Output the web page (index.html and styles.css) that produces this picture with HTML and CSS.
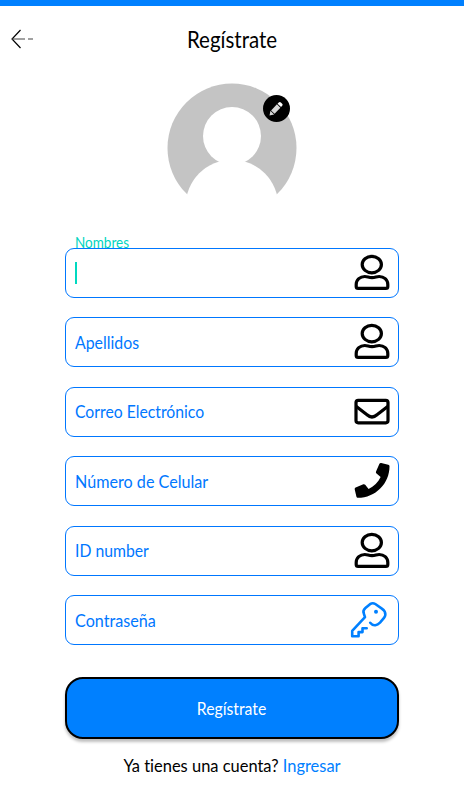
FILE: index.html
```html
<!DOCTYPE html>
<html lang="es">
<head>
  <meta charset="UTF-8" />
  <meta name="viewport" content="width=device-width, initial-scale=1.0" />
  <title>Regístrate</title>
  <link rel="stylesheet" href="styles.css">
</head>
<body>
  <svg width="0" height="0" class="sprite">
    <symbol id="user" viewBox="0 0 40 40">
      <ellipse cx="21.8" cy="11.6" rx="9.6" ry="8.2" />
      <path d="M6.2 33.5v-2c0-5 4-8 8.6-8 2.6 0 4 1.2 7.2 1.2s4.600-1.200 7.200-1.200c4.600 0 8.600 3 8.600 8v2q0 1.900-1.900 1.900H8.100q-1.900 0-1.900-1.900z" />
    </symbol>
  </svg>

  <header class="header">
    <a class="back" href="#" aria-label="Volver">
      <svg width="22" height="20" viewBox="0 0 22 20">
        <path d="M9.500 1L1 10l8.500 9" stroke="#000" stroke-width="1.200" fill="none" />
        <path d="M1 10h13M17 10h5" stroke="#444" stroke-width="1.200" />
      </svg>
    </a>
    <h1>Regístrate</h1>
  </header>

  <div class="avatar">
    <svg width="130" height="130" viewBox="0 0 130 130">
      <circle cx="65" cy="65" r="64.500" fill="#c4c4c4" />
      <circle cx="65" cy="53" r="29" fill="#fff" />
      <circle cx="65" cy="123" r="46.300" fill="#fff" />
    </svg>
    <button class="edit" type="button" aria-label="Editar">
      <svg width="27" height="27" viewBox="0 0 27 27">
        <g transform="translate(6.500 20.500) rotate(-46)" fill="#d6d6d6">
          <path d="M0 0l4-2.600v5.200z" />
          <path d="M4.800-2.400h8.400v4.800H4.800z" />
          <path d="M14.100-2.400h1.700q1.500 0 1.500 1.500v1.800q0 1.500-1.500 1.500h-1.700z" fill="#fff" />
        </g>
      </svg>
    </button>
  </div>

  <form class="form">
    <div class="field focused">
      <label class="name-label">Nombres</label>
      <span class="caret"></span>
      <svg class="icon"><use href="#user" /></svg>
    </div>
    <div class="field">
      <label>Apellidos</label>
      <svg class="icon"><use href="#user" /></svg>
    </div>
    <div class="field">
      <label class="narrow">Correo Electrónico</label>
      <svg class="icon mail" viewBox="0 0 40 40">
        <rect x="6" y="8.300" width="32" height="22.500" rx="2.200" />
        <path d="M6 14.200l11 8.600q5 4.400 10 0l11-8.600" />
      </svg>
    </div>
    <div class="field">
      <label class="wide">Número de Celular</label>
      <svg class="icon phone" viewBox="0 0 40 40">
        <path transform="translate(4.700 2) scale(.068)" d="M493.400 24.600l-104-24c-11.300-2.600-22.900 3.300-27.500 13.900l-48 112c-4.200 9.800-1.400 21.300 6.900 28l60.600 49.600c-36 76.700-98.900 140.500-177.200 177.200l-49.600-60.600c-6.800-8.300-18.200-11.100-28-6.900l-112 48C3.900 366.500-2 378.100.6 389.400l24 104C27.100 504.200 36.700 512 48 512c256.100 0 464-207.500 464-464 0-11.200-7.700-20.900-18.600-23.400z" />
      </svg>
    </div>
    <div class="field">
      <label class="narrow">ID number</label>
      <svg class="icon"><use href="#user" /></svg>
    </div>
    <div class="field">
      <label class="wide">Contraseña</label>
      <svg class="icon key" viewBox="0 0 40 40">
        <path d="M20.200 22.800q2.300 2.900 5.200 2.400 2.400-.4 4.600-2.600l3.800-4.400q2.600-3.300.9-6.700-.8-1.600-3.200-3.200l-6.200-4.300q-2.600-1.600-5.300.2l-4.600 3.900q-3 2.600-1.500 5.700l1.100 3.400L2.200 30.800v5.400h6.400v-4.100h3.900v-3.900h4.200" />
        <circle cx="26" cy="11.800" r="2" class="dot" />
      </svg>
    </div>

    <button class="submit" type="submit"><span>Regístrate</span></button>
  </form>

  <p class="login">Ya tienes una cuenta? <a href="#">Ingresar</a></p>
</body>
</html>
```
FILE: styles.css
```css
* { box-sizing: border-box; }
body {
  margin: 0;
  height: 800px;
  overflow: hidden;
  border-top: 6px solid #0080ff;
  background: #fff;
  color: #000;
  font-family: Lato, "Open Sans", sans-serif;
  font-variant-ligatures: none;
}
.sprite { position: absolute; }

.header { display: grid; grid-template-columns: 65px 1fr 65px; align-items: center; height: 66px; }
.back { display: flex; padding-left: 11px; }
h1 { margin: 0; font-size: 23px; line-height: 26px; font-weight: 400; text-align: center; transform: scaleX(0.89); }

.avatar { position: relative; width: 130px; height: 130px; margin: 11px auto 0; }
.edit {
  position: absolute; top: 12px; right: 7px;
  width: 27px; height: 27px; padding: 0;
  border: 0; border-radius: 50%; background: #000;
}
.edit svg { display: block; }

.form { width: 334px; margin: 34.500px auto 0; display: flex; flex-direction: column; gap: 19.600px; }
.field {
  position: relative;
  display: flex; align-items: center; justify-content: space-between;
  height: 50px; padding: 0 8px 0 9px;
  border: 1.300px solid #0077ff; border-radius: 9px;
}
.field label { color: #0077ff; font-size: 17.500px; white-space: nowrap; transform: scaleX(0.907); transform-origin: left; }
.field .narrow { transform: scaleX(0.9); }
.field .wide { transform: scaleX(0.923); }
.field .name-label { position: absolute; top: -15px; left: 9px; font-size: 14.500px; line-height: 18px; color: #00d5c0; transform: scaleX(0.93); }
.caret { width: 2px; height: 22px; background: #00d9c0; }

.icon { width: 40px; height: 40px; fill: none; stroke: #000; stroke-width: 3.200; stroke-linejoin: round; }
.phone { fill: #000; stroke: none; }
.key { stroke: #0080ff; stroke-width: 2.600; stroke-linecap: round; }
.key .dot { fill: #0080ff; stroke: none; }

.submit {
  height: 62px; margin-top: 12px;
  border: 2.500px solid #000; border-radius: 18px;
  background: #0080ff; color: #fff;
  font: 17.500px Lato, sans-serif;
  box-shadow: 0 3px 3px rgba(0, 0, 0, 0.25);
}
.submit span { display: inline-block; transform: scaleX(0.9); }
.login { margin: 16px 0 0; font-size: 17.500px; line-height: 22px; text-align: center; transform: scaleX(0.94); }
.login a { color: #0080ff; text-decoration: none; }
```
